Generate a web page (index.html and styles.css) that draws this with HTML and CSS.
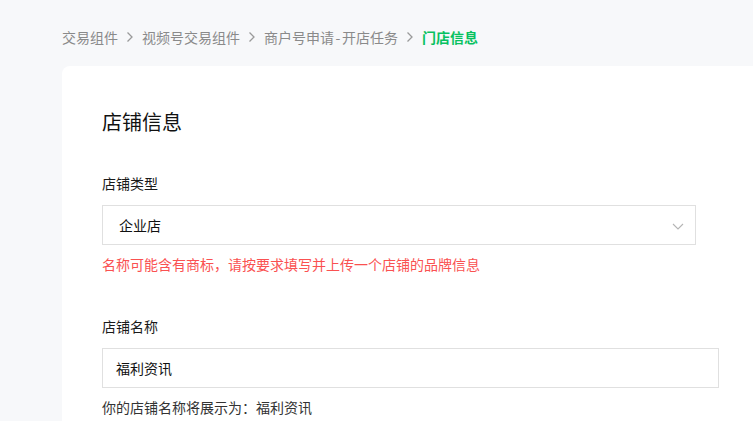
FILE: index.html
```html
<!DOCTYPE html>
<html lang="zh-CN">
<head>
<meta charset="utf-8">
<title>门店信息</title>
<link rel="stylesheet" href="styles.css">
</head>
<body>
<nav class="crumbs">
  <span class="crumb">交易组件</span>
  <svg class="sep" viewBox="0 0 8 12" width="8" height="12"><path d="M1.5 1.5 L6 6 L1.5 10.5" fill="none" stroke="#9a9a9a" stroke-width="1.3"/></svg>
  <span class="crumb">视频号交易组件</span>
  <svg class="sep" viewBox="0 0 8 12" width="8" height="12"><path d="M1.5 1.5 L6 6 L1.5 10.5" fill="none" stroke="#9a9a9a" stroke-width="1.3"/></svg>
  <span class="crumb">商户号申请<span class="dash">-</span>开店任务</span>
  <svg class="sep" viewBox="0 0 8 12" width="8" height="12"><path d="M1.5 1.5 L6 6 L1.5 10.5" fill="none" stroke="#9a9a9a" stroke-width="1.3"/></svg>
  <span class="crumb current">门店信息</span>
</nav>
<main class="card">
  <h1 class="title">店铺信息</h1>
  <div class="field">
    <div class="label">店铺类型</div>
    <div class="select">
      <span>企业店</span>
      <svg class="chev" viewBox="0 0 12 7" width="12" height="7"><path d="M1 1 L6 6 L11 1" fill="none" stroke="#b5b5b5" stroke-width="1.1"/></svg>
    </div>
    <div class="msg error">名称可能含有商标，请按要求填写并上传一个店铺的品牌信息</div>
  </div>
  <div class="field">
    <div class="label">店铺名称</div>
    <div class="input">福利资讯</div>
    <div class="msg">你的店铺名称将展示为：福利资讯</div>
  </div>
</main>
</body>
</html>
```
FILE: styles.css
```css
html, body {
  margin: 0;
  padding: 0;
  background: #f7f8fa;
  overflow: hidden;
  height: 421px;
}
body {
  display: flex;
  flex-direction: column;
  font-family: "Noto Sans CJK SC", "Noto Sans", sans-serif;
  color: #1a1a1a;
}
.crumbs {
  display: flex;
  align-items: center;
  height: 22px;
  padding: 26px 0 0 62px;
  font-size: 14px;
  line-height: 22px;
  color: #8a8a8a;
}
.sep {
  margin: 0 8px 0 8px;
}
.dash {
  display: inline-block;
  width: 8px;
  text-align: center;
}
.current {
  color: #07c160;
  font-weight: 700;
}
.card {
  flex: 1;
  min-height: 0;
  margin: 18px 0 0 62px;
  background: #fff;
  border-radius: 8px 0 0 0;
  padding: 42px 0 0 40px;
  box-sizing: border-box;
  overflow: hidden;
}
.title {
  margin: 0;
  font-size: 20px;
  line-height: 28px;
  font-weight: 400;
  color: #111;
}
.field {
  margin-top: 36px;
}
.field + .field {
  margin-top: 40px;
}
.label {
  font-size: 14px;
  line-height: 22px;
  color: #1a1a1a;
}
.select, .input {
  margin-top: 11px;
  height: 40px;
  box-sizing: border-box;
  border: 1px solid #e0e0e0;
  display: flex;
  align-items: center;
  font-size: 14px;
  color: #111;
}
.select {
  width: 594px;
  padding: 0 11px 0 16px;
  justify-content: space-between;
}
.input {
  width: 617px;
  padding: 0 13px;
}
.chev {
  margin-top: 2px;
}
.msg {
  margin-top: 8px;
  font-size: 14px;
  line-height: 22px;
  color: #333;
}
.msg.error {
  color: #fa5151;
}
```
